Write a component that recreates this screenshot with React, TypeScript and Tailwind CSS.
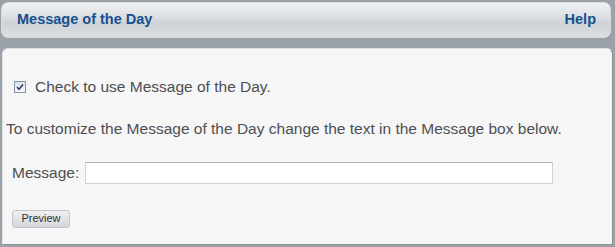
export default function App() {
  return (
    <div className="w-[615px] h-[247px] bg-[#9ba1a8] pt-[2px] pl-[1px] pr-[2px] font-['Liberation_Sans',Arial,sans-serif]">
      <div className="h-[36px] mr-[2px] rounded-[7px] bg-[linear-gradient(#f0f1f3_0%,#dfe2e5_35%,#ced3d7_60%,#dde0e3_100%)] border border-[#d8dbde] flex items-center justify-between pl-[15px] pr-[14px]">
        <span className="text-[14.5px] font-bold text-[#17508f]">Message of the Day</span>
        <span className="text-[14.5px] font-bold text-[#17508f]">Help</span>
      </div>
      <div className="mt-[10px] h-[197px] ml-[1px] rounded-t-[6px] bg-[#f6f6f7] border-l border-t border-[#dfe1e3] border-r border-r-[#8c9298] border-b border-b-[#8c9298] text-[#4d4f52] text-[15.5px] leading-[18px]">
        <div className="pt-[29px] pl-[11px] flex items-center gap-[9px]">
          <span className="w-[12px] h-[12px] border border-[#8793a0] bg-[linear-gradient(#dde2e8,#f7f8fa)] flex items-center justify-center">
            <svg width="8" height="8" viewBox="0 0 8 8">
              <path d="M1 4 L3 6.2 L7 1.5" fill="none" stroke="#2c3d6a" strokeWidth="1.6" />
            </svg>
          </span>
          <span>Check to use Message of the Day.</span>
        </div>
        <div className="pt-[24px] pl-[3px]">
          To customize the Message of the Day change the text in the Message box below.
        </div>
        <div className="pt-[24px] pl-[9px] flex items-center gap-[6px]">
          <span>Message:</span>
          <input type="text" className="w-[468px] h-[22px] bg-white border border-[#cfd2d5] border-t-[#aeb2b6] outline-none" />
        </div>
        <div className="pt-[24px] pl-[9px]">
          <button className="w-[58px] h-[18px] rounded-[3px] border border-[#c3c7cb] bg-[linear-gradient(#eef0f2,#d3d7db)] text-[11px] text-[#333] leading-none">
            Preview
          </button>
        </div>
      </div>
    </div>
  )
}
